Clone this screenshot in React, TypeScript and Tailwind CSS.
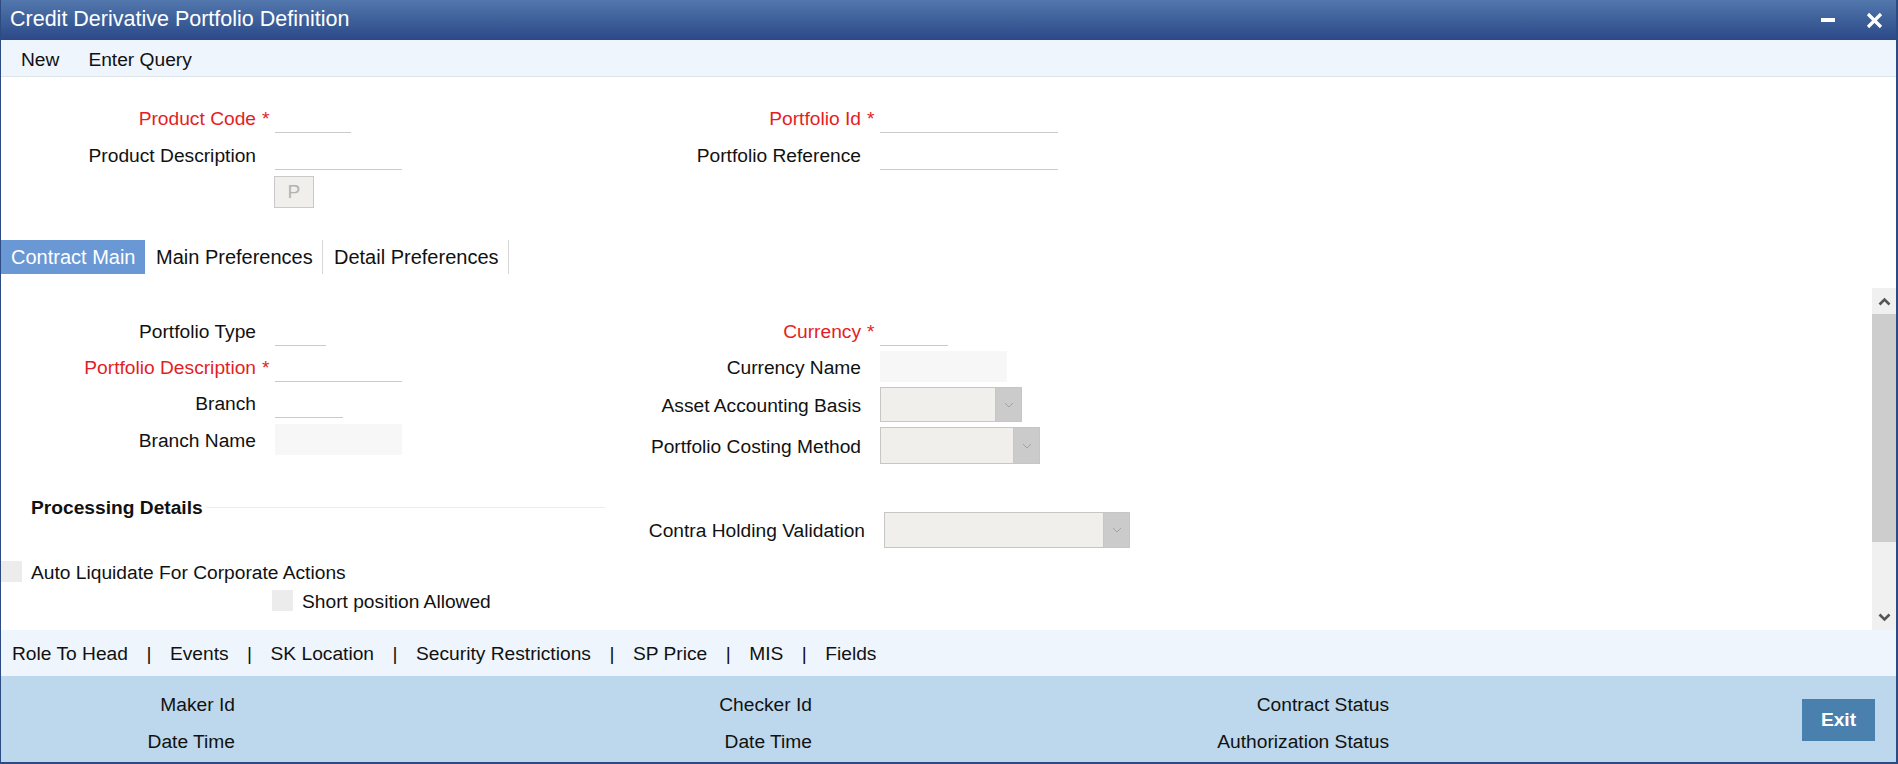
import React from "react"

const font = "font-['Liberation_Sans',Arial,sans-serif]"

function Field({
  label,
  required,
  shift,
  children,
}: {
  label: string
  required?: boolean
  shift?: boolean
  children: React.ReactNode
}) {
  return (
    <div className={`flex items-center ${shift ? "ml-[4px]" : ""}`}>
      <span className={`w-[255px] text-right leading-[22px] pt-[2px] ${required ? "text-[#e31e24]" : "text-[#111]"}`}>
        {label}
      </span>
      <span className="w-[19px] pl-[6px] leading-[22px] pt-[2px] text-[#e31e24]">{required ? "*" : ""}</span>
      {children}
    </div>
  )
}

function Line({ w }: { w: string }) {
  return <div className={`${w} h-[30px] border-b border-[#cacaca]`} />
}

function ReadBox({ w }: { w: string }) {
  return <div className={`${w} h-[31px] bg-[#f7f7f7]`} />
}

function Select({ w, h }: { w: string; h: string }) {
  return (
    <div className={`${w} ${h} flex border border-[#c6c6c6] bg-[#f0efeb]`}>
      <div className="flex-1" />
      <div className="w-[26px] flex items-center justify-center bg-[#cbcbcb] border-l border-[#c6c6c6]">
        <svg width="10" height="6" viewBox="0 0 10 6">
          <polyline points="1,1 5,5 9,1" fill="none" stroke="#a3a3a3" strokeWidth="1" />
        </svg>
      </div>
    </div>
  )
}

function Chevron({ up }: { up?: boolean }) {
  return (
    <svg width="13" height="9" viewBox="0 0 13 9">
      <polyline
        points={up ? "1.5,7.5 6.5,2.5 11.5,7.5" : "1.5,1.5 6.5,6.5 11.5,1.5"}
        fill="none"
        stroke="#555"
        strokeWidth="2.6"
      />
    </svg>
  )
}

function CheckRow({ label, indent }: { label: string; indent?: boolean }) {
  return (
    <div className={`flex items-center h-[21px] ${indent ? "ml-[271px]" : ""}`}>
      <div className="w-[21px] h-[21px] bg-[#ececec]" />
      <span className="ml-[9px] leading-[22px] pt-[2px] text-[#111]">{label}</span>
    </div>
  )
}

const links = ["Role To Head", "Events", "SK Location", "Security Restrictions", "SP Price", "MIS", "Fields"]

export default function App() {
  return (
    <div
      className={`${font} text-[19.2px] w-[1898px] h-[764px] flex flex-col bg-white border-l border-r-2 border-b-2 border-[#2d4b83] overflow-hidden`}
    >
      {/* title bar */}
      <div className="h-[40px] shrink-0 flex items-center justify-between pl-[9px] pr-[13px] bg-gradient-to-b from-[#5277ad] to-[#2b4987]">
        <span className="text-white text-[21.5px] leading-none">Credit Derivative Portfolio Definition</span>
        <div className="flex items-center">
          <div className="w-[14px] h-[4px] bg-white" />
          <svg className="ml-[31px]" width="17" height="17" viewBox="0 0 17 17">
            <path d="M2 2 L15 15 M15 2 L2 15" stroke="white" strokeWidth="3.2" />
          </svg>
        </div>
      </div>

      {/* toolbar */}
      <div className="h-[37px] shrink-0 flex items-center pt-[4px] pl-[20px] gap-[29px] bg-[#eef5fd] border-b border-[#dde4ea] text-[#111]">
        <span>New</span>
        <span>Enter Query</span>
      </div>

      {/* header fields */}
      <div className="h-[163px] shrink-0 pt-[26px] grid grid-cols-[605px_1fr]">
        <div className="flex flex-col gap-[7px]">
          <Field label="Product Code" required>
            <Line w="w-[76px]" />
          </Field>
          <Field label="Product Description">
            <Line w="w-[127px]" />
          </Field>
          <div className="pl-[273px] -mt-[1px]">
            <div className="w-[40px] h-[32px] flex items-center justify-center bg-[#f0efeb] border border-[#c9c9c9] text-[#b3b3b3]">
              P
            </div>
          </div>
        </div>
        <div className="flex flex-col gap-[7px]">
          <Field label="Portfolio Id" required>
            <Line w="w-[178px]" />
          </Field>
          <Field label="Portfolio Reference">
            <Line w="w-[178px]" />
          </Field>
        </div>
      </div>

      {/* tabs */}
      <div className="h-[34px] shrink-0 flex text-[20px]">
        <div className="w-[144px] pl-[10px] flex items-center bg-[#6a98d4] text-white">Contract Main</div>
        <div className="w-[178px] pl-[11px] flex items-center border-r border-[#d6d6d6] text-[#111]">Main Preferences</div>
        <div className="w-[186px] pl-[11px] flex items-center border-r border-[#d6d6d6] text-[#111]">Detail Preferences</div>
      </div>
      <div className="h-[14px] shrink-0" />

      {/* scroll area */}
      <div className="h-[342px] shrink-0 flex">
        <div className="flex-1 pt-[28px]">
          <div className="grid grid-cols-[605px_1fr]">
            <div className="flex flex-col gap-[6px]">
              <Field label="Portfolio Type">
                <Line w="w-[51px]" />
              </Field>
              <Field label="Portfolio Description" required>
                <Line w="w-[127px]" />
              </Field>
              <Field label="Branch">
                <Line w="w-[68px]" />
              </Field>
              <Field label="Branch Name">
                <ReadBox w="w-[127px]" />
              </Field>
            </div>
            <div className="flex flex-col gap-[5px]">
              <Field label="Currency" required>
                <Line w="w-[68px]" />
              </Field>
              <Field label="Currency Name">
                <ReadBox w="w-[127px]" />
              </Field>
              <Field label="Asset Accounting Basis">
                <Select w="w-[142px]" h="h-[35px]" />
              </Field>
              <Field label="Portfolio Costing Method">
                <Select w="w-[160px]" h="h-[37px]" />
              </Field>
            </div>
          </div>

          <div className="grid grid-cols-[605px_1fr]">
            <div className="flex flex-col">
              <div className="mt-[32px] h-[22px] flex items-center pl-[30px] pr-[1px]">
                <span className="font-bold text-[#111] leading-[22px] pt-[2px]">Processing Details</span>
                <div className="ml-[3px] flex-1 h-px bg-[#ececec]" />
              </div>
              <div className="mt-[43px]">
                <CheckRow label="Auto Liquidate For Corporate Actions" />
              </div>
              <div className="mt-[8px]">
                <CheckRow label="Short position Allowed" indent />
              </div>
            </div>
            <div className="mt-[48px]">
              <Field label="Contra Holding Validation" shift>
                <Select w="w-[246px]" h="h-[36px]" />
              </Field>
            </div>
          </div>
        </div>

        {/* scrollbar */}
        <div className="w-[24px] flex flex-col bg-[#f0f0f0]">
          <div className="h-[26px] flex items-center justify-center">
            <Chevron up />
          </div>
          <div className="h-[228px] bg-[#cdcdcd]" />
          <div className="flex-1 flex items-end justify-center pb-[8px]">
            <Chevron />
          </div>
        </div>
      </div>

      {/* links bar */}
      <div className="h-[46px] shrink-0 flex items-center pt-[2px] pl-[11px] bg-[#eef5fd] text-[#111]">
        {links.map((l, i) => (
          <React.Fragment key={l}>
            {i > 0 && <span className="mx-[18.5px]">|</span>}
            <span>{l}</span>
          </React.Fragment>
        ))}
      </div>

      {/* footer */}
      <div className="flex-1 flex bg-[#bdd8ec] text-[#111]">
        {[
          ["Maker Id", "Date Time"],
          ["Checker Id", "Date Time"],
          ["Contract Status", "Authorization Status"],
        ].map((col, i) => (
          <div key={i} className="w-[577px] pt-[18px] flex flex-col gap-[15px]">
            {col.map((t) => (
              <div key={t} className="w-[234px] h-[22px] leading-[22px] text-right">
                {t}
              </div>
            ))}
          </div>
        ))}
        <div className="flex-1" />
        <div className="mt-[23px] mr-[21px] w-[73px] h-[42px] flex items-center justify-center bg-[#4a80ae] text-white font-bold">
          Exit
        </div>
      </div>
    </div>
  )
}
